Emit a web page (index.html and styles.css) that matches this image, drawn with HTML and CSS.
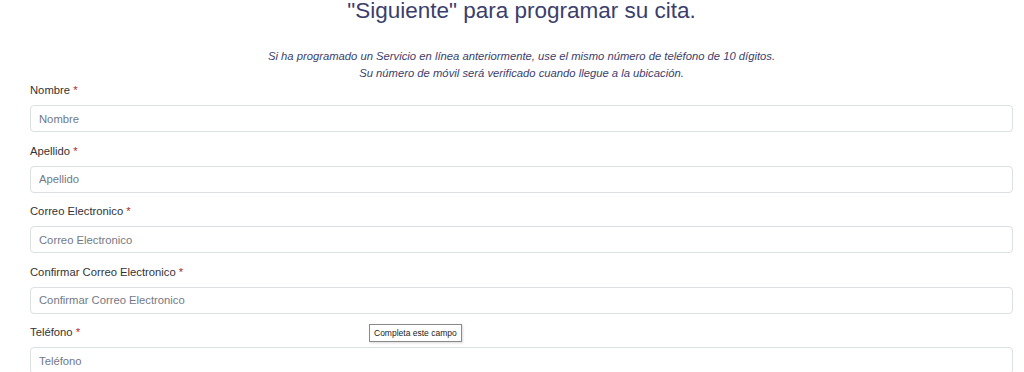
FILE: index.html
```html
<!DOCTYPE html>
<html lang="es">
<head>
  <meta charset="UTF-8" />
  <meta name="viewport" content="width=device-width, initial-scale=1.0" />
  <title>Programar cita</title>
  <link rel="stylesheet" href="styles.css">
</head>
<body>
  <div class="container">
    <h2 class="title">"Siguiente" para programar su cita.</h2>
    <p class="note">
      Si ha programado un Servicio en línea anteriormente, use el mismo número de teléfono de 10 dígitos.<br />
      Su número de móvil será verificado cuando llegue a la ubicación.
    </p>
    <form class="form">
      <div class="field">
        <label for="nombre">Nombre <span class="req">*</span></label>
        <input type="text" id="nombre" placeholder="Nombre" />
      </div>
      <div class="field">
        <label for="apellido">Apellido <span class="req">*</span></label>
        <input type="text" id="apellido" placeholder="Apellido" />
      </div>
      <div class="field">
        <label for="correo">Correo Electronico <span class="req">*</span></label>
        <input type="email" id="correo" placeholder="Correo Electronico" />
      </div>
      <div class="field">
        <label for="correo2">Confirmar Correo Electronico <span class="req">*</span></label>
        <input type="email" id="correo2" placeholder="Confirmar Correo Electronico" />
      </div>
      <div class="field">
        <label for="telefono">Teléfono <span class="req">*</span></label>
        <input type="tel" id="telefono" placeholder="Teléfono" />
        <div class="bubble">Completa este campo</div>
      </div>
    </form>
  </div>
</body>
</html>
```

FILE: styles.css
```css
body {
  font-family: "Liberation Sans", Arial, sans-serif;
  background-color: #ffffff;
  color: #333333;
  margin: 0;
  padding: 0;
}
.container {
  padding: 0 11px 0 30px;
}
.title {
  margin: 0 0 26px;
  font-size: 22.5px;
  font-weight: normal;
  line-height: 22px;
  text-align: center;
  color: #3b3e6c;
}
.note {
  margin: 0;
  font-size: 11.25px;
  font-style: italic;
  line-height: 17px;
  text-align: center;
  color: #3b3e6c;
}
.field {
  position: relative;
  margin-bottom: 10.5px;
}
.field label {
  display: block;
  font-size: 11.25px;
  line-height: 17px;
  margin-bottom: 6px;
  color: #333333;
}
.req {
  color: #b0282d;
}
.field input {
  display: block;
  box-sizing: border-box;
  width: 100%;
  height: 27px;
  margin: 0;
  padding: 0 8px;
  border: 1px solid #dcdfe3;
  border-radius: 4px;
  font-family: inherit;
  font-size: 11.25px;
  color: #333333;
}
.field input::placeholder {
  color: #727985;
}
.bubble {
  position: absolute;
  left: 339px;
  top: 0;
  padding: 2px 4px;
  border: 1px solid #8a8a8a;
  background: #ffffff;
  font-size: 8.5px;
  line-height: 12px;
  color: #222222;
  box-shadow: 1px 1px 2px rgba(0, 0, 0, 0.15);
}
```
